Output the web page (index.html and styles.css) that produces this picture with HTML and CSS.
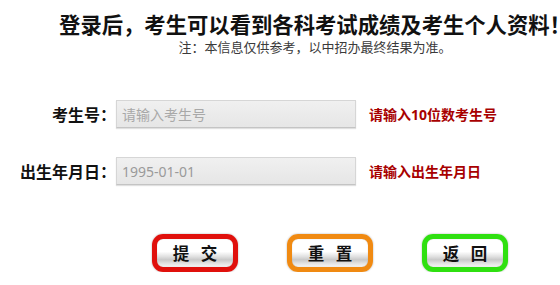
FILE: index.html
```html
<!DOCTYPE html>
<html lang="zh-CN">
<head>
<meta charset="utf-8">
<title>考生登录</title>
<link rel="stylesheet" href="styles.css">
</head>
<body>
<div class="page">
  <div class="header">
    <h1 class="title">登录后，考生可以看到各科考试成绩及考生个人资料！</h1>
    <p class="note">注：本信息仅供参考，以中招办最终结果为准。</p>
  </div>
  <form class="form">
    <div class="row">
      <label class="label" for="ksh">考生号：</label>
      <input class="field" id="ksh" type="text" placeholder="请输入考生号">
      <span class="hint">请输入10位数考生号</span>
    </div>
    <div class="row">
      <label class="label" for="csrq">出生年月日：</label>
      <input class="field" id="csrq" type="text" value="1995-01-01">
      <span class="hint">请输入出生年月日</span>
    </div>
    <div class="actions">
      <button class="btn btn-red" type="button">提 交</button>
      <button class="btn btn-orange" type="button">重 置</button>
      <button class="btn btn-green" type="button">返 回</button>
    </div>
  </form>
</div>
</body>
</html>
```
FILE: styles.css
```css
html, body {
  margin: 0;
  padding: 0;
  overflow: hidden;
  background: #ffffff;
}

body {
  font-family: "Noto Sans CJK SC", "Noto Sans", sans-serif;
  color: #111111;
}

.page {
  width: 560px;
}

.header {
  width: 630px;
  text-align: center;
  white-space: nowrap;
}

.title {
  margin: 0;
  padding-top: 12px;
  font-size: 21.33px;
  line-height: 24px;
  font-weight: 700;
  color: #111111;
}

.note {
  margin: 3px 0 0 0;
  font-size: 13px;
  line-height: 16px;
  color: #3a3a3a;
}

.form {
  margin: 45px 0 0 0;
}

.row {
  display: flex;
  align-items: center;
  height: 28px;
  margin-bottom: 29px;
}

.label {
  width: 116px;
  flex: none;
  text-align: right;
  font-size: 16px;
  font-weight: 700;
  color: #111111;
}

.field {
  box-sizing: border-box;
  width: 240px;
  height: 28px;
  margin: 0;
  padding: 0 5px;
  flex: none;
  border: 1px solid #d6d6d6;
  border-bottom-color: #c4c4c4;
  background: linear-gradient(#f0f0f0, #e6e6e6);
  box-shadow: 0 1px 1px rgba(0, 0, 0, 0.12);
  font-family: "Noto Sans", "Noto Sans CJK SC", sans-serif;
  font-size: 14px;
  color: #9a9a9a;
  outline: none;
}

.field::placeholder {
  color: #a8a8a8;
  font-family: "Noto Sans CJK SC", sans-serif;
}

.hint {
  margin-left: 13px;
  font-family: "Noto Sans", "Noto Sans CJK SC", sans-serif;
  font-size: 14px;
  font-weight: 700;
  color: #a80000;
}

.actions {
  display: flex;
  gap: 49px;
  padding-left: 152px;
  margin-top: 49px;
}

.btn {
  box-sizing: border-box;
  width: 86px;
  height: 38px;
  margin: 0;
  padding: 0 0 0 4px;
  border: 5px solid;
  border-radius: 11px;
  background: linear-gradient(#ffffff 0%, #ffffff 45%, #e2e2e2 62%, #c9c9c9 74%, #e4e4e4 88%, #f6f6f6 100%);
  box-shadow: 0 0 2px rgba(0, 0, 0, 0.35), inset 0 0 1px rgba(0, 0, 0, 0.3);
  font-family: "Noto Sans CJK SC", sans-serif;
  font-size: 16.5px;
  font-weight: 700;
  letter-spacing: 4px;
  color: #111111;
  line-height: 26px;
  cursor: pointer;
}

.btn-red {
  border-color: #e0100c;
}

.btn-orange {
  border-color: #f08a12;
}

.btn-green {
  border-color: #2fe010;
}
```
